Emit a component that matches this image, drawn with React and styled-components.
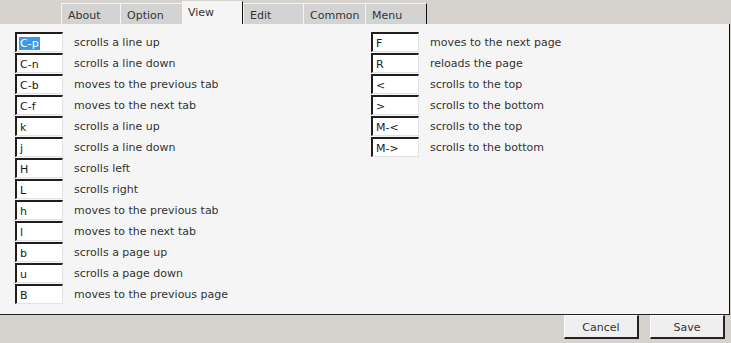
import React from "react";
import styled, { createGlobalStyle } from "styled-components";

const GlobalStyle = createGlobalStyle`
  html, body {
    margin: 0;
    padding: 0;
    background: #d6d2ce;
  }
  body {
    font-family: "DejaVu Sans", "Liberation Sans", sans-serif;
    font-size: 11px;
    color: #333;
  }
`;

const Window = styled.div`
  width: 731px;
  height: 343px;
  display: flex;
  flex-direction: column;
  background: #d6d2ce;
  overflow: hidden;
`;

const TabBar = styled.div`
  height: 24px;
  display: flex;
  align-items: flex-end;
  padding-left: 61px;
  box-sizing: border-box;
`;

const Tab = styled.div`
  box-sizing: border-box;
  width: ${(p) => p.$width}px;
  height: ${(p) => (p.$active ? 23 : 21)}px;
  padding-left: ${(p) => (p.$active ? 5 : 6)}px;
  padding-top: ${(p) => (p.$active ? 4 : 5)}px;
  background: ${(p) => (p.$active ? "#f5f5f5" : "#d3d3d3")};
  border-top: 1px solid ${(p) => (p.$active ? "#f5f5f5" : "#f4f4f4")};
  border-left: 1px solid ${(p) => (p.$active ? "#f5f5f5" : "#f4f4f4")};
  border-right: ${(p) => (p.$dark ? "1px solid #111" : "none")};
  color: #333;
  white-space: nowrap;
`;

const Panel = styled.div`
  box-sizing: border-box;
  width: 730px;
  height: 291px;
  background: #f5f5f5;
  border-right: 1px solid #111;
  border-bottom: 1px solid #222;
  display: flex;
  padding: 8px 0 0 15px;
`;

const Column = styled.div`
  width: ${(p) => p.$width}px;
  display: flex;
  flex-direction: column;
  gap: 1px;
`;

const Row = styled.div`
  display: flex;
  align-items: center;
  height: 20px;
`;

const KeyBox = styled.div`
  box-sizing: border-box;
  width: 48px;
  height: 20px;
  background: #fff;
  border-style: solid;
  border-width: 2px 1px 1px 2px;
  border-color: #1e1e1e #e2e2e2 #e2e2e2 #1e1e1e;
  padding: 3px 0 0 2px;
  color: #1a1a1a;
  margin-right: 11px;
`;

const KeyText = styled.span`
  padding: 0 1px;
  background: ${(p) => (p.$selected ? "#3d99e8" : "transparent")};
  color: ${(p) => (p.$selected ? "#fff" : "#1a1a1a")};
`;

const Desc = styled.span`
  color: #333;
  white-space: nowrap;
`;

const Footer = styled.div`
  flex: 1;
  display: flex;
  justify-content: flex-end;
  align-items: flex-start;
  gap: 11px;
  padding: 0 6px 0 0;
`;

const Button = styled.button`
  box-sizing: border-box;
  width: 75px;
  height: 24px;
  background: #efefef;
  border-style: solid;
  border-width: 1px 2px 2px 1px;
  border-color: #fafafa #222 #222 #fafafa;
  font-family: "DejaVu Sans", "Liberation Sans", sans-serif;
  font-size: 11px;
  color: #333;
  padding: 2px 0 0;
`;

const tabs = [
  { label: "About", width: 59 },
  { label: "Option", width: 62 },
  { label: "View", width: 61, active: true },
  { label: "Edit", width: 60 },
  { label: "Common", width: 62 },
  { label: "Menu", width: 62, last: true },
];

const leftKeys = [
  ["C-p", "scrolls a line up"],
  ["C-n", "scrolls a line down"],
  ["C-b", "moves to the previous tab"],
  ["C-f", "moves to the next tab"],
  ["k", "scrolls a line up"],
  ["j", "scrolls a line down"],
  ["H", "scrolls left"],
  ["L", "scrolls right"],
  ["h", "moves to the previous tab"],
  ["l", "moves to the next tab"],
  ["b", "scrolls a page up"],
  ["u", "scrolls a page down"],
  ["B", "moves to the previous page"],
];

const rightKeys = [
  ["F", "moves to the next page"],
  ["R", "reloads the page"],
  ["<", "scrolls to the top"],
  [">", "scrolls to the bottom"],
  ["M-<", "scrolls to the top"],
  ["M->", "scrolls to the bottom"],
];

const KeyRow = ({ keyName, desc, selected }) => (
  <Row>
    <KeyBox>
      <KeyText $selected={selected}>{keyName}</KeyText>
    </KeyBox>
    <Desc>{desc}</Desc>
  </Row>
);

export default function App() {
  return (
    <Window>
      <GlobalStyle />
      <TabBar>
        {tabs.map((t) => (
          <Tab
            key={t.label}
            $width={t.width}
            $active={t.active}
            $dark={t.active || t.last}
          >
            {t.label}
          </Tab>
        ))}
      </TabBar>
      <Panel>
        <Column $width={356}>
          {leftKeys.map(([k, d], i) => (
            <KeyRow key={i} keyName={k} desc={d} selected={i === 0} />
          ))}
        </Column>
        <Column $width={300}>
          {rightKeys.map(([k, d], i) => (
            <KeyRow key={i} keyName={k} desc={d} />
          ))}
        </Column>
      </Panel>
      <Footer>
        <Button>Cancel</Button>
        <Button>Save</Button>
      </Footer>
    </Window>
  );
}
